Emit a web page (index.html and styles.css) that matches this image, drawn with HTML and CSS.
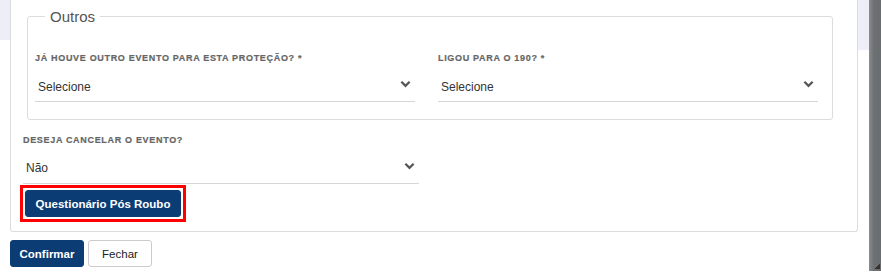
FILE: index.html
```html
<!DOCTYPE html>
<html lang="pt">
<head>
<meta charset="utf-8">
<link rel="stylesheet" href="styles.css">
</head>
<body>
<div class="page">
  <div class="main">
    <div class="area">
      <div class="gutter-left"><div class="tint tint-left"></div></div>
      <div class="card">
        <fieldset class="group">
          <legend>Outros</legend>
          <div class="row">
            <div class="field">
              <label class="lbl">Já houve outro evento para esta proteção? *</label>
              <div class="select"><span>Selecione</span><svg class="chev" viewBox="0 0 12 8"><polyline points="1.5,1.5 6,6 10.5,1.5"/></svg></div>
            </div>
            <div class="field">
              <label class="lbl">Ligou para o 190? *</label>
              <div class="select"><span>Selecione</span><svg class="chev" viewBox="0 0 12 8"><polyline points="1.5,1.5 6,6 10.5,1.5"/></svg></div>
            </div>
          </div>
        </fieldset>
        <div class="field field-wide">
          <label class="lbl">Deseja cancelar o evento?</label>
          <div class="select select-wide"><span>Não</span><svg class="chev" viewBox="0 0 12 8"><polyline points="1.5,1.5 6,6 10.5,1.5"/></svg></div>
        </div>
        <div class="highlight"><button class="btn btn-primary">Questionário Pós Roubo</button></div>
      </div>
      <div class="gutter-right"><div class="tint tint-right"></div></div>
    </div>
    <div class="actions">
      <button class="btn btn-primary btn-confirm">Confirmar</button>
      <button class="btn btn-default">Fechar</button>
    </div>
  </div>
  <div class="scrollbar"><span class="grip"></span></div>
</div>
</body>
</html>
```

FILE: styles.css
```css
html, body {
  margin: 0;
  padding: 0;
  background: #fff;
  font-family: "Liberation Sans", Arial, sans-serif;
}
.page {
  display: flex;
  width: 881px;
  height: 275px;
  overflow: hidden;
}
.main {
  width: 869px;
  display: flex;
  flex-direction: column;
}
.area {
  display: flex;
}
.gutter-left { width: 10px; }
.gutter-right { width: 11px; }
.tint { background: #eeeef8; }
.tint-left { height: 40px; }
.tint-right { height: 50px; }
.card {
  width: 834px;
  border: 1px solid #dcdcdc;
  border-top: none;
  border-radius: 0 0 3px 3px;
  padding: 0 0 9px 12px;
  box-sizing: content-box;
}
.group {
  margin: 8px 0 0 4px;
  width: 806px;
  box-sizing: border-box;
  border: 1px solid #dcdcdc;
  border-radius: 3px;
  padding: 27px 0 17px 7px;
}
.group legend {
  font-size: 15px;
  line-height: 17px;
  color: #555;
  padding: 0 5px;
  margin-left: 10px;
}
.row {
  display: flex;
  gap: 23px;
}
.field { width: 380px; }
.field-wide { width: 396px; margin-top: 14px; }
.lbl {
  display: block;
  font-size: 9px;
  line-height: 12px;
  font-weight: bold;
  text-transform: uppercase;
  letter-spacing: 0.68px;
  color: #666;
  -webkit-text-stroke: 0.2px #666;
}
.select {
  margin-top: 6px;
  height: 31px;
  border-bottom: 1px solid #d6d6d6;
  display: flex;
  align-items: center;
  justify-content: space-between;
  padding: 0 4px 0 3px;
  font-size: 12px;
  color: #333;
}
.select span { padding-top: 2px; }
.select-wide {
  margin-top: 5px;
  height: 32px;
}
.chev {
  width: 11px;
  height: 8px;
  margin-top: -3px;
  fill: none;
  stroke: #555;
  stroke-width: 2.4;
}
.highlight {
  display: inline-block;
  margin: 1px 0 0 -3px;
  border: 3px solid #ff0000;
  padding: 2px;
}
.btn {
  font-family: "Liberation Sans", Arial, sans-serif;
  font-size: 11.5px;
  height: 27px;
  border-radius: 3px;
  cursor: pointer;
  display: block;
}
.btn-primary {
  background: #0b3d74;
  color: #fff;
  font-weight: bold;
  border: 1px solid #0b3d74;
  width: 156px;
  padding: 0;
}
.actions {
  display: flex;
  gap: 4px;
  padding: 8px 0 0 10px;
}
.btn-confirm { width: 74px; }
.btn-default {
  background: #fff;
  color: #222;
  border: 1px solid #ccc;
  width: 64px;
  padding: 0;
}
.scrollbar {
  width: 12px;
  height: 271px;
  background: linear-gradient(to right, #8a8d90 0, #6e7174 40%, #6a6d70 100%);
  position: relative;
}
.grip {
  position: absolute;
  right: 1px;
  bottom: 2px;
  width: 6px;
  height: 6px;
  background: linear-gradient(135deg, transparent 50%, #3a3030 50%);
}
```
